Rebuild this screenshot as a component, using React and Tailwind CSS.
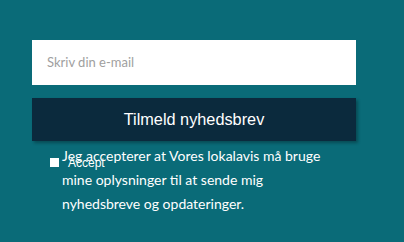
export default function App() {
  return (
    <div className="w-[404px] h-[242px] bg-[#0a6b78] overflow-hidden pt-[40px] pl-[32px]" style={{ fontFamily: "Lato, sans-serif" }}>
      <div className="w-[324px] h-[45px] bg-white flex items-center pl-[15px] text-[13px] text-[#a0a0a0]">
        Skriv din e-mail
      </div>
      <div className="mt-[13px] w-[324px] h-[43px] bg-[#0b2a3d] flex items-center justify-center pb-[1px] text-[16.3px] text-white shadow-[2px_2px_3px_rgba(0,0,0,0.3)]" style={{ fontFamily: "'Liberation Sans', Arial, sans-serif" }}>
        Tilmeld nyhedsbrev
      </div>
      <div className="relative mt-[3px] pl-[30px] text-[14px] leading-[24px] text-white w-[320px]">
        <span className="absolute left-[18px] top-[14px] w-[9px] h-[9px] bg-white"></span>
        <span className="absolute left-[36px] top-[12px] text-[12px] leading-[14px] text-white" style={{ fontFamily: "'Liberation Sans', Arial, sans-serif" }}>Accept</span>
        <div>Jeg accepterer at Vores lokalavis må bruge</div>
        <div>mine oplysninger til at sende mig</div>
        <div>nyhedsbreve og opdateringer.</div>
      </div>
    </div>
  );
}
